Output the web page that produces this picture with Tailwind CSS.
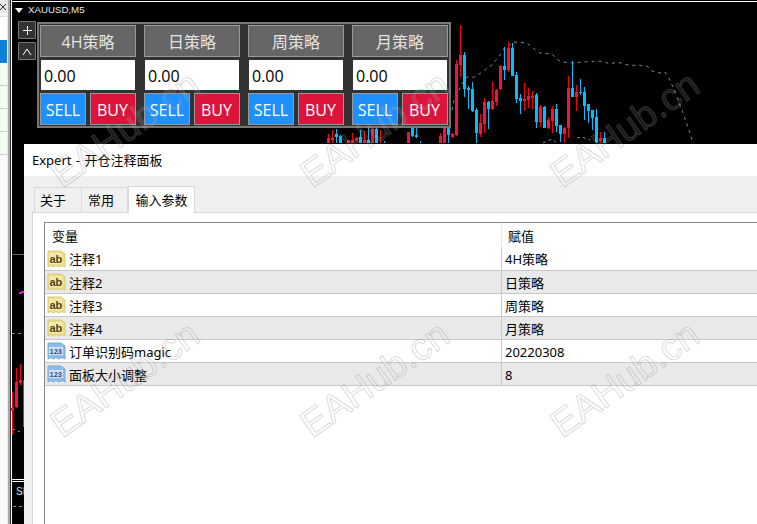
<!DOCTYPE html>
<html lang="zh">
<head>
<meta charset="utf-8">
<script src="https://cdn.jsdelivr.net/npm/@tailwindcss/browser@4"></script>
</head>
<body class="m-0">
<div class="relative flex w-[757px] h-[524px] overflow-hidden bg-white font-['Noto_Sans','Noto_Sans_CJK_SC',sans-serif] text-[13px] text-black">

  <!-- left list strip -->
  <div class="flex w-[12px] shrink-0">
    <div class="flex flex-col w-[7px] bg-[#fafafa]">
      <div class="h-[13px] bg-[#e8e8e8]">
        <svg width="7" height="13" viewBox="0 0 7 13" fill="none" stroke="#333" stroke-width="1"><path d="M0 4L6 10M6 4L0 10"/></svg>
      </div>
      <div class="h-[4px] border-b border-[#ddd]"></div>
      <div class="h-[23px] bg-white"></div>
      <div class="h-[23px] bg-[#0f7fdc]"></div>
      <div class="h-[23px] bg-[#f0fff0] border-b border-[#ccc]"></div>
      <div class="h-[23px] bg-[#f0fff0] border-b border-[#ccc]"></div>
      <div class="h-[23px] bg-[#f0fff0] border-b border-[#ccc]"></div>
      <div class="h-[23px] bg-[#f0fff0] border-b border-[#ccc]"></div>
    </div>
    <div class="w-[1px] bg-[#e8e8e8]"></div>
    <div class="w-[2px] bg-[#a8a8a8]"></div>
    <div class="w-[1px] bg-[#303030]"></div>
    <div class="w-[1px] bg-white"></div>
  </div>

  <!-- chart window -->
  <div class="relative flex-1 bg-black">
    <div class="h-[1px] bg-black"></div>
    <div class="h-[1px] bg-white"></div>
    <div class="flex items-center gap-[5px] h-[16px] pl-[3px] font-['Liberation_Sans',sans-serif] text-[9.7px] text-[#e8e8e8]">
      <span class="block w-0 h-0 border-x-[4px] border-x-transparent border-t-[5px] border-t-white"></span>
      <span>XAUUSD,M5</span>
    </div>
  </div>

  <!-- candles -->
  <svg class="absolute left-0 top-0 pointer-events-none" width="757" height="524" viewBox="0 0 757 524" fill="none" shape-rendering="crispEdges">
    <path stroke="#7f8a96" stroke-width="1" stroke-dasharray="3 4" shape-rendering="auto" d="M452 110L454 100L463 82L467 77L475 77L485 70L492 65L500 55L505 47L515 42L527 43L533 48L540 53L552 54L558 60L563 62L570 63L598 61L605 62L610 64L617 62L628 65L647 66L652 71L660 73L665 72L670 80L677 97L683 113L690 133L693 143"/>
    <path stroke="#7f8a96" stroke-width="1" stroke-dasharray="3 3" shape-rendering="auto" d="M543 143L552 139L557 143M577 138L582 137L590 140"/>
    <path stroke="#ff0000" d="M452.5 133V138M456.5 60V136M460.5 25V77M480.5 114V137M484.5 98V133M492.5 82V110M496.5 89V106M500.5 65V90M508.5 42V72M524.5 83V111M528.5 88V108M532.5 91V109M540.5 105V127M548.5 117V129M552.5 106V133M564.5 127V143M568.5 76V138M576.5 85V111M600.5 132V143M328.5 134V143M332.5 130V143M348.5 140V143M352.5 133V143M356.5 137V142M364.5 131V143M372.5 128V143M380.5 130V143M408.5 132V143M440.5 133V143M444.5 128V143"/>
    <path stroke="#f5104a" stroke-width="3" d="M452.5 134V137M456.5 64V135M460.5 55V65M480.5 123V134M484.5 102V124M492.5 101V109M496.5 90V102M500.5 66V89M508.5 48V70M524.5 99V101M528.5 96V100M532.5 96V98M540.5 107V122M548.5 120V128M552.5 109V121M564.5 128V134M568.5 88V128M576.5 92V97M600.5 138V141M328.5 138V143M332.5 138V140M348.5 140V143M352.5 140V143M356.5 138V140M364.5 140V143M372.5 129V143M408.5 132V143M440.5 136V143M444.5 128V143"/>
    <path stroke="#00bfff" d="M464.5 52V97M468.5 86V109M472.5 82V112M476.5 108V143M488.5 101V129M504.5 47V80M512.5 43V76M516.5 72V103M520.5 94V114M536.5 93V128M544.5 106V128M556.5 104V132M560.5 125V142M572.5 61V97M580.5 79V95M584.5 87V120M588.5 104V123M592.5 110V130M596.5 109V143M604.5 132V143M336.5 129V143M340.5 135V143M360.5 130V143M368.5 128V143M376.5 128V143M384.5 141V143M412.5 128V137M416.5 128V138M420.5 141V143M448.5 128V143"/>
    <path stroke="#00bfff" stroke-width="3" d="M464.5 55V89M468.5 88V90M472.5 89V111M476.5 110V133M488.5 102V109M504.5 66V70M512.5 48V76M516.5 75V99M520.5 98V101M536.5 95V122M544.5 107V128M556.5 109V126M560.5 125V134M572.5 88V97M580.5 92V93M584.5 92V106M588.5 104V111M592.5 110V118M596.5 117V142M604.5 138V143M336.5 134V137M340.5 136V143M360.5 137V143M368.5 140V143M376.5 129V143M412.5 128V136M416.5 135V137M448.5 128V135"/>
    <!-- sliver of the chart left of the dialog -->
    <path stroke="#5a6a7a" d="M12 254.5H24"/>
    <path stroke="#ff00e0" stroke-width="2" d="M19 293.5L24 291.5"/>
    <path stroke="#8a8a8a" d="M12 333.5H15M18 333.5H21M12 429.5H15M18 431.5H20M13 506.5H16M19 506.5H22"/>
    <path stroke="#ff0000" d="M12.5 392V435M20.5 364V385M16.5 368V408"/>
    <path stroke="#f5104a" stroke-width="3" d="M16.5 382V407M20.5 380V383M12.5 408V411"/>
    <path stroke="#2c6f80" d="M23.5 380V427"/>
    <path stroke="#ffffff" d="M12 479.5H24M12 481.5H24"/>
  </svg>
  <span class="absolute left-[16px] top-[484px] font-['Liberation_Sans',sans-serif] text-[10px] text-[#cfe4ff]">SI</span>

  <!-- +/^ buttons -->
  <div class="absolute left-[18px] top-[21px] flex flex-col gap-[3px]">
    <div class="flex items-center justify-center w-[18px] h-[18px] bg-[#333] border border-[#777] rounded-[1px]">
      <svg width="10" height="10" viewBox="0 0 10 10" fill="none" stroke="#fff" stroke-width="1" shape-rendering="crispEdges"><path d="M5.500 1V10M1 5.500H10"/></svg>
    </div>
    <div class="flex items-center justify-center w-[18px] h-[18px] bg-[#333] border border-[#777] rounded-[1px]">
      <svg width="10" height="7" viewBox="0 0 10 7" fill="none" stroke="#fff" stroke-width="1"><path d="M1 7L5 1L9 7"/></svg>
    </div>
  </div>

  <!-- strategy panel -->
  <div class="absolute left-[37px] top-[22px] flex gap-[8px] p-[1px] w-[414px] h-[106px] bg-[#333] border-2 border-[#777] font-['Open_Sans','Noto_Sans_CJK_SC',sans-serif] text-[16px]">
    <div class="flex flex-col gap-[3px] w-[96px]">
      <div class="flex items-center justify-center h-[32px] pt-[2px] bg-[#666] border border-[#999] text-[#e4e4e4]">4H策略</div>
      <div class="flex items-center h-[30px] mx-[1px] pl-[3px] pt-[1px] bg-white">0.00</div>
      <div class="flex justify-between">
        <div class="flex items-center justify-center w-[46px] h-[32px] pt-[1px] bg-[#1e90ff] border border-[#999] text-white">SELL</div>
        <div class="flex items-center justify-center w-[46px] h-[32px] pt-[1px] pr-[1px] bg-[#dc143c] border border-[#999] text-white">BUY</div>
      </div>
    </div>
    <div class="flex flex-col gap-[3px] w-[96px]">
      <div class="flex items-center justify-center h-[32px] pt-[2px] bg-[#666] border border-[#999] text-[#e4e4e4]">日策略</div>
      <div class="flex items-center h-[30px] mx-[1px] pl-[3px] pt-[1px] bg-white">0.00</div>
      <div class="flex justify-between">
        <div class="flex items-center justify-center w-[46px] h-[32px] pt-[1px] bg-[#1e90ff] border border-[#999] text-white">SELL</div>
        <div class="flex items-center justify-center w-[46px] h-[32px] pt-[1px] pr-[1px] bg-[#dc143c] border border-[#999] text-white">BUY</div>
      </div>
    </div>
    <div class="flex flex-col gap-[3px] w-[96px]">
      <div class="flex items-center justify-center h-[32px] pt-[2px] bg-[#666] border border-[#999] text-[#e4e4e4]">周策略</div>
      <div class="flex items-center h-[30px] mx-[1px] pl-[3px] pt-[1px] bg-white">0.00</div>
      <div class="flex justify-between">
        <div class="flex items-center justify-center w-[46px] h-[32px] pt-[1px] bg-[#1e90ff] border border-[#999] text-white">SELL</div>
        <div class="flex items-center justify-center w-[46px] h-[32px] pt-[1px] pr-[1px] bg-[#dc143c] border border-[#999] text-white">BUY</div>
      </div>
    </div>
    <div class="flex flex-col gap-[3px] w-[96px]">
      <div class="flex items-center justify-center h-[32px] pt-[2px] bg-[#666] border border-[#999] text-[#e4e4e4]">月策略</div>
      <div class="flex items-center h-[30px] mx-[1px] pl-[3px] pt-[1px] bg-white">0.00</div>
      <div class="flex justify-between">
        <div class="flex items-center justify-center w-[46px] h-[32px] pt-[1px] bg-[#1e90ff] border border-[#999] text-white">SELL</div>
        <div class="flex items-center justify-center w-[46px] h-[32px] pt-[1px] pr-[1px] bg-[#dc143c] border border-[#999] text-white">BUY</div>
      </div>
    </div>
  </div>

  <!-- dialog window -->
  <div class="absolute left-[24px] top-[144px] flex flex-col w-[733px] h-[380px] bg-[#f0f0f0]">
    <div class="flex items-center h-[32px] pl-[8px] pt-[1px] bg-white [word-spacing:1px]">Expert - 开仓注释面板</div>
    <div class="flex items-end h-[36px] pl-[10px]">
      <div class="flex items-center w-[48px] h-[25px] -mr-[1px] pl-[5px] pt-[1px] border border-b-0 border-[#d9d9d9]">关于</div>
      <div class="flex items-center w-[47px] h-[25px] pl-[7px] pt-[1px] border border-b-0 border-l-0 border-[#d9d9d9]">常用</div>
      <div class="relative z-10 flex items-center justify-center w-[67px] h-[27px] -mb-[1px] pt-[1px] bg-white border border-b-0 border-[#d9d9d9]">输入参数</div>
    </div>
    <div class="flex-1 ml-[8px] pl-[11px] pt-[9px] bg-white border-l border-t border-[#d9d9d9]">
      <div class="h-full border-l border-t border-[#8a8a8a]">
        <div class="flex h-[24px]">
          <div class="flex items-center w-[456px] pl-[7px] pt-[3px]">变量</div>
          <div class="flex items-center flex-1 pl-[6px] pt-[3px] border-l border-[#e6e6e6]">赋值</div>
        </div>
        <!-- rows -->
        <div class="flex h-[24px] border-b border-[#c8c8c8]">
          <div class="flex items-center gap-[3px] w-[456px] pl-[2px]">
            <svg width="19" height="18" viewBox="0 0 19 18" font-family="Liberation Sans" class="shrink-0"><path d="M1 1H14L18 4V17L15 15.500L12 17L9 15.500L6 17L3.500 15.500L1 17Z" fill="#ecdf8e" stroke="#d8ca7c"/><rect x="2" y="3" width="13" height="11" fill="#f3eaa8"/><text x="2.500" y="12.500" font-size="11" font-weight="700" fill="#4a4320">ab</text></svg>
            <span class="block pt-[2px]">注释1</span>
          </div>
          <div class="flex items-center flex-1 pl-[3px] pt-[2px] border-l border-[#c8c8c8]">4H策略</div>
        </div>
        <div class="flex h-[23px] bg-[#e9e9e9] border-b border-[#c8c8c8]">
          <div class="flex items-center gap-[3px] w-[456px] pl-[2px]">
            <svg width="19" height="18" viewBox="0 0 19 18" font-family="Liberation Sans" class="shrink-0"><path d="M1 1H14L18 4V17L15 15.500L12 17L9 15.500L6 17L3.500 15.500L1 17Z" fill="#ecdf8e" stroke="#d8ca7c"/><rect x="2" y="3" width="13" height="11" fill="#f3eaa8"/><text x="2.500" y="12.500" font-size="11" font-weight="700" fill="#4a4320">ab</text></svg>
            <span class="block pt-[4px]">注释2</span>
          </div>
          <div class="flex items-center flex-1 pl-[3px] pt-[4px] border-l border-[#c8c8c8]">日策略</div>
        </div>
        <div class="flex h-[23px] border-b border-[#c8c8c8]">
          <div class="flex items-center gap-[3px] w-[456px] pl-[2px]">
            <svg width="19" height="18" viewBox="0 0 19 18" font-family="Liberation Sans" class="shrink-0"><path d="M1 1H14L18 4V17L15 15.500L12 17L9 15.500L6 17L3.500 15.500L1 17Z" fill="#ecdf8e" stroke="#d8ca7c"/><rect x="2" y="3" width="13" height="11" fill="#f3eaa8"/><text x="2.500" y="12.500" font-size="11" font-weight="700" fill="#4a4320">ab</text></svg>
            <span class="block pt-[4px]">注释3</span>
          </div>
          <div class="flex items-center flex-1 pl-[3px] pt-[4px] border-l border-[#c8c8c8]">周策略</div>
        </div>
        <div class="flex h-[23px] bg-[#e9e9e9] border-b border-[#c8c8c8]">
          <div class="flex items-center gap-[3px] w-[456px] pl-[2px]">
            <svg width="19" height="18" viewBox="0 0 19 18" font-family="Liberation Sans" class="shrink-0"><path d="M1 1H14L18 4V17L15 15.500L12 17L9 15.500L6 17L3.500 15.500L1 17Z" fill="#ecdf8e" stroke="#d8ca7c"/><rect x="2" y="3" width="13" height="11" fill="#f3eaa8"/><text x="2.500" y="12.500" font-size="11" font-weight="700" fill="#4a4320">ab</text></svg>
            <span class="block pt-[4px]">注释4</span>
          </div>
          <div class="flex items-center flex-1 pl-[3px] pt-[4px] border-l border-[#c8c8c8]">月策略</div>
        </div>
        <div class="flex h-[23px] border-b border-[#c8c8c8]">
          <div class="flex items-center gap-[3px] w-[456px] pl-[2px]">
            <svg width="19" height="18" viewBox="0 0 19 18" font-family="Liberation Sans" class="shrink-0"><path d="M1 1H14L18 4V17L15 15.500L12 17L9 15.500L6 17L3.500 15.500L1 17Z" fill="#8fbbe8" stroke="#7aa8d8"/><rect x="2" y="5" width="14" height="8" fill="#cfe3f7"/><text x="2.500" y="12" font-size="7.500" font-weight="700" fill="#1f4f85">123</text></svg>
            <span class="block pt-[4px]">订单识别码magic</span>
          </div>
          <div class="flex items-center flex-1 pl-[3px] pt-[4px] border-l border-[#c8c8c8]">20220308</div>
        </div>
        <div class="flex h-[23px] bg-[#e9e9e9] border-b border-[#c8c8c8]">
          <div class="flex items-center gap-[3px] w-[456px] pl-[2px]">
            <svg width="19" height="18" viewBox="0 0 19 18" font-family="Liberation Sans" class="shrink-0"><path d="M1 1H14L18 4V17L15 15.500L12 17L9 15.500L6 17L3.500 15.500L1 17Z" fill="#8fbbe8" stroke="#7aa8d8"/><rect x="2" y="5" width="14" height="8" fill="#cfe3f7"/><text x="2.500" y="12" font-size="7.500" font-weight="700" fill="#1f4f85">123</text></svg>
            <span class="block pt-[4px]">面板大小调整</span>
          </div>
          <div class="flex items-center flex-1 pl-[3px] pt-[4px] border-l border-[#c8c8c8]">8</div>
        </div>
      </div>
    </div>
  </div>

  <!-- watermarks -->
  <span class="absolute left-[39px] top-[106px] -rotate-[35deg] pointer-events-none font-['Liberation_Sans',sans-serif] text-[38px] leading-[46px] text-white/10 [-webkit-text-stroke:1px_rgba(128,128,128,0.3)]">EAHub.cn</span>
  <span class="absolute left-[289px] top-[106px] -rotate-[35deg] pointer-events-none font-['Liberation_Sans',sans-serif] text-[38px] leading-[46px] text-white/10 [-webkit-text-stroke:1px_rgba(128,128,128,0.3)]">EAHub.cn</span>
  <span class="absolute left-[539px] top-[106px] -rotate-[35deg] pointer-events-none font-['Liberation_Sans',sans-serif] text-[38px] leading-[46px] text-white/10 [-webkit-text-stroke:1px_rgba(128,128,128,0.3)]">EAHub.cn</span>
  <span class="absolute left-[39px] top-[356px] -rotate-[35deg] pointer-events-none font-['Liberation_Sans',sans-serif] text-[38px] leading-[46px] text-white/10 [-webkit-text-stroke:1px_rgba(128,128,128,0.3)]">EAHub.cn</span>
  <span class="absolute left-[289px] top-[356px] -rotate-[35deg] pointer-events-none font-['Liberation_Sans',sans-serif] text-[38px] leading-[46px] text-white/10 [-webkit-text-stroke:1px_rgba(128,128,128,0.3)]">EAHub.cn</span>
  <span class="absolute left-[539px] top-[356px] -rotate-[35deg] pointer-events-none font-['Liberation_Sans',sans-serif] text-[38px] leading-[46px] text-white/10 [-webkit-text-stroke:1px_rgba(128,128,128,0.3)]">EAHub.cn</span>
</div>
</body>
</html>
